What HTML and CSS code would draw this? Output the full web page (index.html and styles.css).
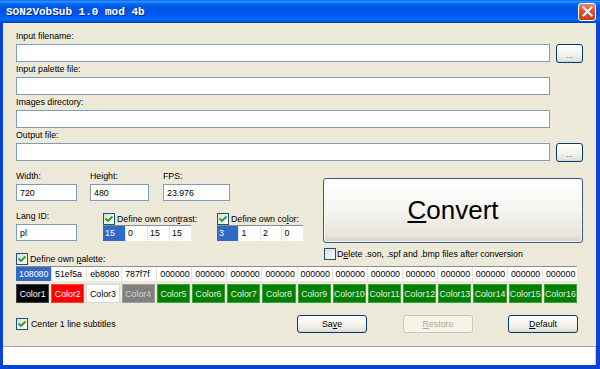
FILE: index.html
```html
<!DOCTYPE html>
<html lang="en">

<head>
    <meta charset="UTF-8">
    <title>SON2VobSub 1.0 mod 4b</title>
    <link rel="stylesheet" href="styles.css">
</head>

<body>
    <div class="window">
        <div class="titlebar">
            <span class="title">SON2VobSub 1.0 mod 4b</span>
            <span class="close">
                <svg width="11" height="11" viewBox="0 0 11 11">
                    <path d="M1.5 1.5 L9.5 9.5 M9.5 1.5 L1.5 9.5" stroke="#fff" stroke-width="2" stroke-linecap="square" />
                </svg>
            </span>
        </div>
        <div class="frame">
            <div class="body">
                <!-- file fields -->
                <div class="file-row">
                    <div class="label">Input filename:</div>
                    <div class="field-line"><input class="input wide" type="text"><span class="btn browse">...</span></div>
                </div>
                <div class="file-row">
                    <div class="label">Input palette file:</div>
                    <div class="field-line"><input class="input wide" type="text"></div>
                </div>
                <div class="file-row">
                    <div class="label">Images directory:</div>
                    <div class="field-line"><input class="input wide" type="text"></div>
                </div>
                <div class="file-row">
                    <div class="label">Output file:</div>
                    <div class="field-line"><input class="input wide" type="text"><span class="btn browse">...</span></div>
                </div>

                <div class="middle">
                    <div class="left-col">
                        <div class="size-row">
                            <div class="field f-width">
                                <div class="label">Width:</div>
                                <input class="input small" type="text" value="720">
                            </div>
                            <div class="field f-height">
                                <div class="label">Height:</div>
                                <input class="input small" type="text" value="480">
                            </div>
                            <div class="field f-fps">
                                <div class="label">FPS:</div>
                                <input class="input small" type="text" value="23.976">
                            </div>
                        </div>
                        <div class="opt-row">
                            <div class="field f-width">
                                <div class="label">Lang ID:</div>
                                <input class="input small" type="text" value="pl">
                            </div>
                            <div class="cell-group g-contrast">
                                <div class="check check-line">
                                    <span class="box"><svg width="10" height="10" viewBox="0 0 10 10"><path d="M1.5 4.5 L4 7 L8.5 2.5" fill="none" stroke="#21a121" stroke-width="1.8" /></svg></span>
                                    <span>Define own con<u>t</u>rast:</span>
                                </div>
                                <div class="cells">
                                    <span class="sel">15</span><span>0</span><span>15</span><span>15</span>
                                </div>
                            </div>
                            <div class="cell-group g-color">
                                <div class="check check-line">
                                    <span class="box"><svg width="10" height="10" viewBox="0 0 10 10"><path d="M1.5 4.5 L4 7 L8.5 2.5" fill="none" stroke="#21a121" stroke-width="1.8" /></svg></span>
                                    <span>Define own co<u>l</u>or:</span>
                                </div>
                                <div class="cells">
                                    <span class="sel">3</span><span>1</span><span>2</span><span>0</span>
                                </div>
                            </div>
                        </div>
                    </div>
                    <div class="btn convert"><span><u>C</u>onvert</span></div>
                </div>

                <div class="palette-head">
                    <div class="check palette-check">
                        <span class="box"><svg width="10" height="10" viewBox="0 0 10 10"><path d="M1.5 4.5 L4 7 L8.5 2.5" fill="none" stroke="#21a121" stroke-width="1.8" /></svg></span>
                        <span>Define own <u>p</u>alette:</span>
                    </div>
                    <div class="check delete-check">
                        <span class="box"></span>
                        <span>D<u>e</u>lete .son, .spf and .bmp files after conversion</span>
                    </div>
                </div>

                <div class="hex-row">
                    <span class="sel">108080</span><span>51ef5a</span><span>eb8080</span><span>787f7f</span>
                    <span>000000</span><span>000000</span><span>000000</span><span>000000</span>
                    <span>000000</span><span>000000</span><span>000000</span><span>000000</span>
                    <span>000000</span><span>000000</span><span>000000</span><span>000000</span>
                </div>

                <div class="color-row">
                    <span class="c-black">Color1</span>
                    <span class="c-red">Color2</span>
                    <span class="c-white">Color3</span>
                    <span class="c-gray">Color4</span>
                    <span class="c-green">Color5</span>
                    <span class="c-green">Color6</span>
                    <span class="c-green">Color7</span>
                    <span class="c-green">Color8</span>
                    <span class="c-green">Color9</span>
                    <span class="c-green">Color10</span>
                    <span class="c-green">Color11</span>
                    <span class="c-green">Color12</span>
                    <span class="c-green">Color13</span>
                    <span class="c-green">Color14</span>
                    <span class="c-green">Color15</span>
                    <span class="c-green">Color16</span>
                </div>

                <div class="bottom-row">
                    <div class="check center-check">
                        <span class="box"><svg width="10" height="10" viewBox="0 0 10 10"><path d="M1.5 4.5 L4 7 L8.5 2.5" fill="none" stroke="#21a121" stroke-width="1.8" /></svg></span>
                        <span>Center 1 line subtitles</span>
                    </div>
                    <span class="btn action">Sa<u>v</u>e</span>
                    <span class="btn action disabled restore"><u>R</u>estore</span>
                    <span class="btn action default"><u>D</u>efault</span>
                </div>
            </div>
            <div class="statusbar"></div>
        </div>
    </div>
</body>

</html>
```

FILE: styles.css
```css
* {
    margin: 0;
    padding: 0;
    box-sizing: border-box;
}

body {
    width: 600px;
    height: 369px;
    overflow: hidden;
    font-family: "Liberation Sans", Arial, sans-serif;
    font-size: 8.8px;
    color: #000;
    background: #fff;
}

u {
    text-decoration: underline;
}

.window {
    width: 600px;
    height: 369px;
    display: flex;
    flex-direction: column;
    background: #ece9d8;
}

/* title bar */
.titlebar {
    height: 23px;
    display: flex;
    align-items: center;
    justify-content: space-between;
    padding: 0 4px 0 6px;
    background: linear-gradient(to bottom, #0058ee 0%, #3593ff 5%, #288eff 8%, #127dff 12%, #036ffc 16%, #0262ee 22%, #0057e5 30%, #0054e3 40%, #0055eb 60%, #005bf5 70%, #026afe 80%, #0062ef 88%, #0052d6 94%, #0040ab 100%);
}

.title {
    font-family: "Liberation Mono", monospace;
    font-weight: bold;
    font-size: 11px;
    color: #fff;
    text-shadow: 1px 1px #0a2a8a;
}

.close {
    width: 18px;
    height: 18px;
    border: 1px solid #fff;
    border-radius: 3px;
    background: linear-gradient(to bottom, #e98a6c, #dc5532 40%, #cc3d16);
    display: flex;
    align-items: center;
    justify-content: center;
}

.frame {
    flex: 1;
    display: flex;
    flex-direction: column;
    border: solid #0843d6;
    border-width: 0 4px 4px 3px;
}

.body {
    flex: 1;
    padding: 6px 0 0 13px;
}

.label {
    line-height: 15px;
    height: 15px;
    white-space: nowrap;
}

.input {
    display: block;
    border: 1px solid #7f9db9;
    background: #fff;
    font-family: "Liberation Sans", Arial, sans-serif;
    font-size: 8.8px;
    color: #000;
    padding: 0 3px;
    outline: none;
}

.wide {
    width: 534px;
    height: 18px;
}

.small {
    width: 100%;
    height: 17px;
}

.field-line {
    display: flex;
    gap: 6px;
    height: 18px;
    align-items: flex-start;
}

/* XP buttons */
.btn {
    border: 1px solid #003c74;
    border-radius: 3px;
    background: linear-gradient(to bottom, #ffffff, #f4f4f0 50%, #e6e3da 90%, #d6d0c5);
    display: flex;
    align-items: center;
    justify-content: center;
    white-space: nowrap;
}

.browse {
    width: 27px;
    height: 19px;
    font-size: 8px;
    color: #444;
    padding-top: 3px;
}

.middle {
    display: flex;
    margin-top: 8px;
}

.left-col {
    width: 307px;
}

.size-row,
.opt-row {
    display: flex;
}

.opt-row {
    margin-top: 8px;
}

.f-width {
    width: 61px;
}

.f-height {
    width: 59px;
    margin-left: 13px;
}

.f-fps {
    width: 67px;
    margin-left: 14px;
}

.g-contrast {
    width: 88px;
    margin-left: 26px;
}

.g-color {
    width: 86px;
    margin-left: 26px;
}

/* checkboxes */
.check {
    display: flex;
    align-items: center;
    gap: 2px;
    height: 15px;
    white-space: nowrap;
}

.box {
    width: 12px;
    height: 12px;
    border: 1px solid #1c5180;
    background: linear-gradient(135deg, #dcdcd7, #ffffff);
    display: flex;
    align-items: center;
    justify-content: center;
    flex-shrink: 0;
}

.check-line {
    height: 16px;
    padding-top: 3px;
}

.cells {
    display: flex;
    height: 16px;
    border-top: 1px solid #8c8c8c;
    background: #fff;
}

.cells span {
    width: 22px;
    line-height: 15px;
    padding-left: 2px;
    border-left: 1px solid #e2e2e2;
}

.cells span:first-child {
    border-left: 0;
}

.sel {
    background: #316ac5;
    color: #fff;
}

.convert {
    width: 260px;
    height: 65px;
    margin-top: 9px;
    font-size: 26px;
    border-color: #3c5a8f;
    box-shadow: inset 0 0 0 1px #f6f6f3;
}

.palette-head {
    display: flex;
    height: 20px;
    margin-top: 3px;
}

.palette-check {
    width: 308px;
    align-self: flex-end;
}

.delete-check {
    gap: 1px;
}

.hex-row {
    display: grid;
    grid-template-columns: repeat(16, 1fr);
    width: 561px;
    height: 15px;
    border-top: 1px solid #8c8c8c;
    background: #fff;
}

.hex-row span {
    line-height: 14px;
    padding-left: 3px;
    border-left: 1px solid #e2e2e2;
}

.hex-row span:first-child {
    border-left: 0;
}

.color-row {
    display: grid;
    grid-template-columns: repeat(16, 1fr);
    gap: 2px;
    width: 561px;
    height: 19px;
    margin-top: 3px;
}

.color-row span {
    display: flex;
    align-items: center;
    justify-content: center;
    color: #fff;
    box-shadow: inset 0 0 0 1px rgba(255, 255, 255, 0.25);
}

.c-black {
    background: #000;
}

.c-red {
    background: #ff0000;
}

.c-white {
    background: #fff;
    color: #000 !important;
    box-shadow: inset 0 0 0 1px #d8d8d8 !important;
}

.c-gray {
    background: #808080;
    color: #d0d0d0 !important;
}

.c-green {
    background: #008000;
    color: #e6f2e6 !important;
}

.bottom-row {
    display: flex;
    align-items: center;
    height: 18px;
    margin-top: 12px;
}

.center-check {
    width: 281px;
    gap: 3px;
}

.action {
    width: 70px;
    height: 18px;
}

.restore {
    margin-left: 36px;
}

.default {
    margin-left: 35px;
}

.disabled {
    border-color: #c9c7ba;
    color: #aca899;
    background: #f5f4ea;
}

.statusbar {
    height: 19px;
    background: #fff;
    border-top: 1px solid #aca899;
    border-right: 1px solid #d6d2c2;
}
```
